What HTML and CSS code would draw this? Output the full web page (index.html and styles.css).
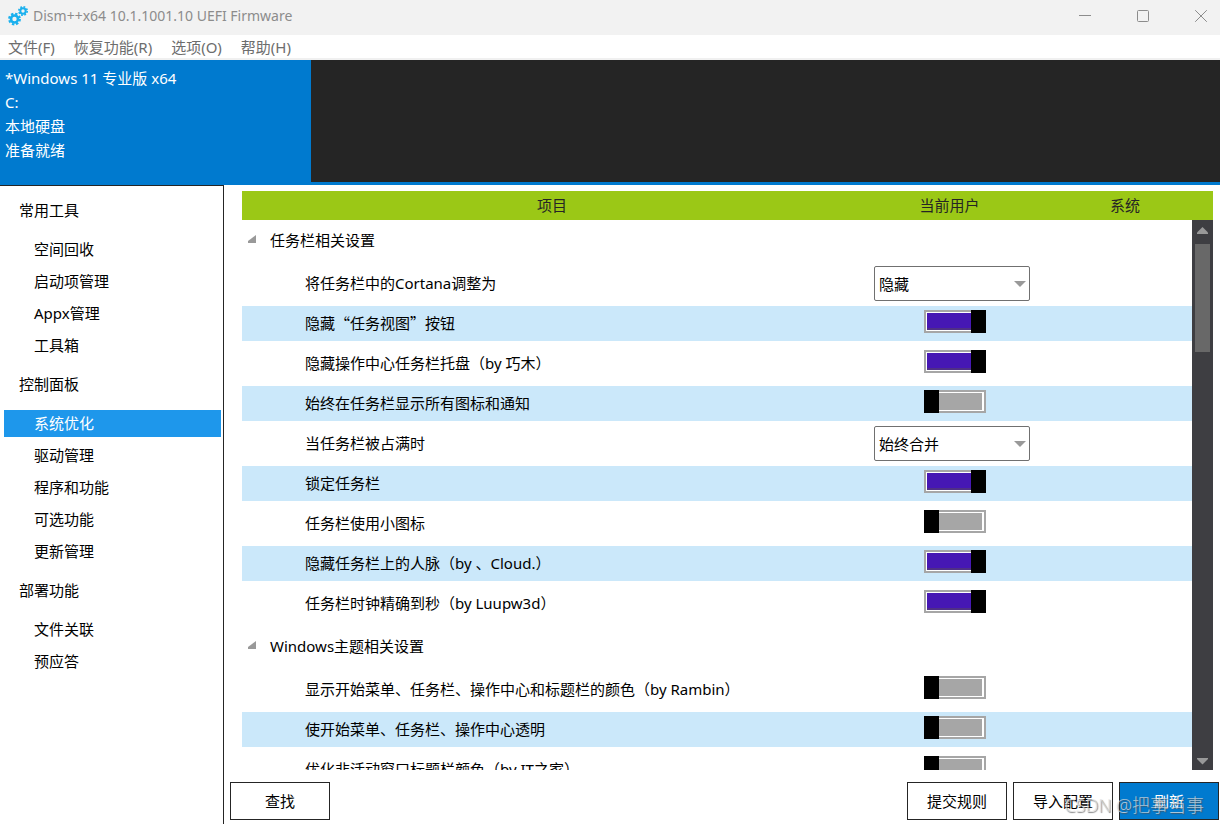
FILE: index.html
```html
<!DOCTYPE html>
<html lang="zh-CN">
<head>
<meta charset="utf-8">
<title>Dism++x64 10.1.1001.10 UEFI Firmware</title>
<link rel="stylesheet" href="styles.css">
</head>
<body>
<div class="window">
  <header class="titlebar">
    <svg class="app-icon" viewBox="0 0 20 20" aria-hidden="true">
      <g fill="none" stroke="#19b0ee">
        <circle cx="6.500" cy="13" r="3.500" stroke-width="2.600"/>
        <circle cx="6.500" cy="13" r="5.400" stroke-width="2" stroke-dasharray="2.400 1.840"/>
        <circle cx="15" cy="5" r="2.700" stroke-width="2"/>
        <circle cx="15" cy="5" r="4.200" stroke-width="1.600" stroke-dasharray="1.800 1.500"/>
      </g>
    </svg>
    <span class="title">Dism++x64 10.1.1001.10 UEFI Firmware</span>
    <div class="window-controls">
      <button class="control" type="button" aria-label="最小化"><svg viewBox="0 0 12 12"><path d="M0 5.500h12"/></svg></button>
      <button class="control" type="button" aria-label="最大化"><svg viewBox="0 0 12 12"><rect x=".5" y=".5" width="11" height="11" rx="1"/></svg></button>
      <button class="control" type="button" aria-label="关闭"><svg viewBox="0 0 12 12"><path d="M.2.2l11.600 11.600M11.800.2L.2 11.800"/></svg></button>
    </div>
  </header>
  <nav class="menubar">
    <button type="button">文件(F)</button>
    <button type="button">恢复功能(R)</button>
    <button type="button">选项(O)</button>
    <button type="button">帮助(H)</button>
  </nav>
  <section class="images">
    <div class="image-card">
      <div>*Windows 11 专业版 x64</div>
      <div>C:</div>
      <div>本地硬盘</div>
      <div>准备就绪</div>
    </div>
  </section>
  <div class="content">
    <nav class="sidebar">
      <h2>常用工具</h2>
      <button type="button">空间回收</button>
      <button type="button">启动项管理</button>
      <button type="button">Appx管理</button>
      <button type="button">工具箱</button>
      <h2>控制面板</h2>
      <button type="button" class="selected">系统优化</button>
      <button type="button">驱动管理</button>
      <button type="button">程序和功能</button>
      <button type="button">可选功能</button>
      <button type="button">更新管理</button>
      <h2>部署功能</h2>
      <button type="button">文件关联</button>
      <button type="button">预应答</button>
    </nav>
    <main class="main">
      <div class="list">
        <table class="settings">
          <thead>
            <tr><th>项目</th><th>当前用户</th><th>系统</th></tr>
          </thead>
          <tbody>
            <tr class="group"><th colspan="3"><svg class="expander" viewBox="0 0 8 8" aria-hidden="true"><path d="M8 0v8H0V6z"/></svg>任务栏相关设置</th></tr>
            <tr><td><label for="s1">将任务栏中的Cortana调整为</label></td><td><span class="combo"><select id="s1"><option>隐藏</option></select></span></td><td></td></tr>
            <tr class="alt"><td><label for="s2">隐藏<span class="cjk">“</span>任务视图<span class="cjk">”</span>按钮</label></td><td><input id="s2" class="toggle" type="checkbox" checked></td><td></td></tr>
            <tr><td><label for="s3">隐藏操作中心任务栏托盘（by 巧木）</label></td><td><input id="s3" class="toggle" type="checkbox" checked></td><td></td></tr>
            <tr class="alt"><td><label for="s4">始终在任务栏显示所有图标和通知</label></td><td><input id="s4" class="toggle" type="checkbox"></td><td></td></tr>
            <tr><td><label for="s5">当任务栏被占满时</label></td><td><span class="combo"><select id="s5"><option>始终合并</option></select></span></td><td></td></tr>
            <tr class="alt"><td><label for="s6">锁定任务栏</label></td><td><input id="s6" class="toggle" type="checkbox" checked></td><td></td></tr>
            <tr><td><label for="s7">任务栏使用小图标</label></td><td><input id="s7" class="toggle" type="checkbox"></td><td></td></tr>
            <tr class="alt"><td><label for="s8">隐藏任务栏上的人脉（by 、Cloud.）</label></td><td><input id="s8" class="toggle" type="checkbox" checked></td><td></td></tr>
            <tr><td><label for="s9">任务栏时钟精确到秒（by Luupw3d）</label></td><td><input id="s9" class="toggle" type="checkbox" checked></td><td></td></tr>
            <tr class="group"><th colspan="3"><svg class="expander" viewBox="0 0 8 8" aria-hidden="true"><path d="M8 0v8H0V6z"/></svg>Windows主题相关设置</th></tr>
            <tr><td><label for="s10">显示开始菜单、任务栏、操作中心和标题栏的颜色（by Rambin）</label></td><td><input id="s10" class="toggle" type="checkbox"></td><td></td></tr>
            <tr class="alt"><td><label for="s11">使开始菜单、任务栏、操作中心透明</label></td><td><input id="s11" class="toggle" type="checkbox"></td><td></td></tr>
            <tr><td><label for="s12">优化非活动窗口标题栏颜色（by IT之家）</label></td><td><input id="s12" class="toggle" type="checkbox"></td><td></td></tr>
          </tbody>
        </table>
        <div class="scrollbar" aria-hidden="true">
          <svg viewBox="0 0 11 7"><path d="M0 7V5.500L5.500 0 11 5.500V7z"/></svg>
          <div class="track"><div class="thumb"></div></div>
          <svg viewBox="0 0 11 7"><path d="M0 0h11v1L5.500 6.500 0 1z"/></svg>
        </div>
      </div>
      <footer class="actions">
        <button type="button" class="find">查找</button>
        <button type="button">提交规则</button>
        <button type="button">导入配置</button>
        <button type="button" class="primary">刷新</button>
      </footer>
    </main>
  </div>
  <div class="watermark">CSDN @把事当事</div>
</div>
</body>
</html>
```
FILE: styles.css
```css
* {
  box-sizing: border-box;
}

body {
  margin: 0;
  font: 15px/20px "Noto Sans", "Noto Sans CJK SC", sans-serif;
  color: #000;
  background: #fff;
}

button,
select {
  font: inherit;
  color: inherit;
}

button {
  margin: 0;
  padding: 0;
  border: 0;
  background: none;
}

.window {
  position: relative;
  display: flex;
  flex-direction: column;
  height: 100vh;
  overflow: hidden;
}

.titlebar {
  display: flex;
  align-items: center;
  flex: none;
  height: 35px;
  padding: 0 13px 3px 8px;
  background: #f2f2f2;
  color: #8c8c8c;
  font-size: 14px;
}

.app-icon {
  width: 20px;
  height: 20px;
  margin-right: 5px;
}

.window-controls {
  display: flex;
  gap: 46px;
  margin-left: auto;
}

.control {
  display: flex;
}

.control svg {
  width: 12px;
  height: 12px;
  overflow: visible;
  fill: none;
  stroke: #8c8c8c;
}

.menubar {
  display: flex;
  flex: none;
  gap: 19px;
  height: 25px;
  padding-left: 8px;
  border-bottom: 2px solid #f0f0f0;
  color: #6d6d6d;
}

.images {
  display: flex;
  flex: none;
  height: 125px;
  border-bottom: 3px solid #007acf;
  background: #252525;
}

.image-card {
  width: 311px;
  padding: 6px 5px 0;
  background: #007acf;
  color: #fff;
  line-height: 24px;
}

.content {
  display: flex;
  flex: 1;
  min-height: 0;
}

.sidebar {
  display: flex;
  flex-direction: column;
  flex: none;
  gap: 5px;
  width: 224px;
  padding: 4px 2px 0 4px;
  border: solid #252525;
  border-width: 1px 1px 0 0;
}

.sidebar h2 {
  flex: none;
  margin: 0;
  padding-left: 15px;
  font-size: 15px;
  font-weight: 400;
  line-height: 41px;
}

.sidebar button {
  flex: none;
  padding-left: 30px;
  text-align: left;
  line-height: 27px;
}

.sidebar .selected {
  background: #1e97eb;
  color: #fff;
}

.main {
  display: flex;
  flex-direction: column;
  flex: 1;
  min-width: 0;
}

.list {
  display: grid;
  grid-template: 29px minmax(0, 1fr) / minmax(0, 1fr) 21px;
  flex: 1;
  min-height: 0;
  margin: 6px 7px 0 18px;
}

.settings {
  display: flex;
  flex-direction: column;
  grid-area: 1 / 1 / 3 / 3;
  min-height: 0;
}

.settings th {
  padding: 0;
  font-weight: 400;
}

.settings td {
  padding: 0;
}

.settings thead {
  display: block;
  flex: none;
  background: #9bc816;
  color: #252525;
  line-height: 29px;
}

.settings thead tr {
  display: grid;
  grid-template-columns: 1fr 175px 176px;
}

.settings tbody {
  display: flex;
  flex-direction: column;
  flex: 1;
  gap: 5px;
  min-height: 0;
  margin-right: 21px;
  overflow: hidden;
}

.settings tbody tr {
  display: grid;
  grid-template-columns: 1fr 175px 155px;
  flex: none;
  height: 35px;
  line-height: 35px;
}

.settings tbody .group {
  display: block;
  height: 41px;
  line-height: 41px;
}

.settings .group th {
  display: flex;
  align-items: center;
  gap: 14px;
  padding-left: 6px;
}

.expander {
  width: 8px;
  height: 8px;
  margin-bottom: 4px;
  fill: #999;
}

.alt {
  background: #cbe8fa;
}

.settings td:first-child {
  padding-left: 63px;
}

.cjk {
  font-family: "Noto Sans CJK SC", sans-serif;
  line-height: 20px;
}

.combo {
  position: relative;
  display: block;
  width: 156px;
  margin-left: 12px;
}

.combo::after {
  content: "";
  position: absolute;
  top: 15px;
  right: 4px;
  border: solid transparent;
  border-width: 6px 6px 0;
  border-top-color: #999;
}

.combo select {
  display: block;
  width: 100%;
  height: 35px;
  padding: 0 4px 2px;
  border: 1px solid #707070;
  border-radius: 2px;
  background: #fff;
  appearance: none;
}

.toggle {
  position: relative;
  display: block;
  width: 62px;
  height: 23px;
  margin: 4px 0 0 62px;
  padding: 1px 2px 1px 1px;
  border: 2px solid #a6a6a6;
  background: linear-gradient(#a6a6a6, #a6a6a6) content-box, #fff;
  appearance: none;
}

.toggle:checked {
  background: linear-gradient(#4617b4 15px, #4f2f86 15px) content-box, #fff;
}

.toggle::before {
  content: "";
  position: absolute;
  top: -2px;
  bottom: -2px;
  left: -2px;
  width: 15px;
  background: #000;
}

.toggle:checked::before {
  right: -2px;
  left: auto;
}

.scrollbar {
  display: flex;
  flex-direction: column;
  align-items: center;
  grid-area: 2 / 2;
  padding: 7px 0 5px;
  background: #3e3e42;
}

.scrollbar svg {
  flex: none;
  width: 11px;
  height: 7px;
  fill: #999;
}

.track {
  flex: 1;
  width: 15px;
  padding: 10px 0;
}

.thumb {
  height: 108px;
  background: #686868;
}

.actions {
  display: flex;
  flex: none;
  gap: 6px;
  padding: 12px 1px 4px 6px;
}

.actions button {
  width: 100px;
  height: 38px;
  border: 1px solid #252525;
  background: #fff;
}

.actions .find {
  margin-right: auto;
}

.actions .primary {
  background: #007acf;
  color: #fff;
}

.watermark {
  position: absolute;
  right: 16px;
  bottom: 7px;
  color: rgba(225, 225, 225, 0.75);
  font-size: 18px;
  font-weight: 300;
  line-height: 24px;
  text-shadow: 1px 1px 1px rgba(80, 80, 80, 0.7);
  pointer-events: none;
}
```
